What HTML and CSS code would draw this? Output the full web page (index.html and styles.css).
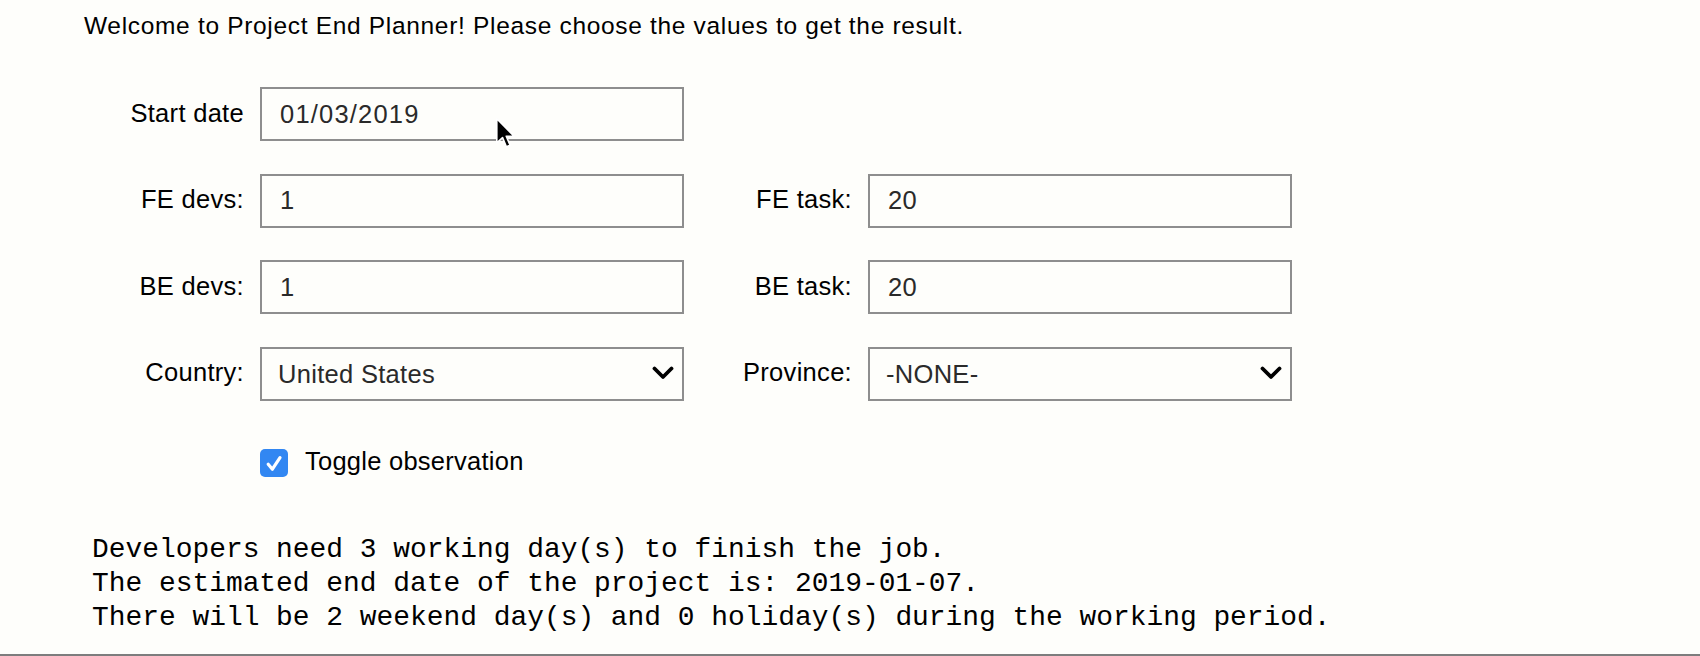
FILE: index.html
```html
<!DOCTYPE html>
<html lang="en">
<head>
<meta charset="utf-8">
<title>Project End Planner</title>
<link rel="stylesheet" href="styles.css">
</head>
<body>
<div class="page">
  <p class="welcome">Welcome to Project End Planner! Please choose the values to get the result.</p>
  <form class="form">
    <label class="label label-left" for="start">Start date</label>
    <input class="field field-date" id="start" type="text" value="01/03/2019">

    <label class="label label-left" for="fedevs">FE devs:</label>
    <input class="field" id="fedevs" type="text" value="1">
    <label class="label" for="fetask">FE task:</label>
    <input class="field" id="fetask" type="text" value="20">

    <label class="label label-left" for="bedevs">BE devs:</label>
    <input class="field" id="bedevs" type="text" value="1">
    <label class="label" for="betask">BE task:</label>
    <input class="field" id="betask" type="text" value="20">

    <label class="label label-left" for="country">Country:</label>
    <div class="select-wrap">
      <select class="field select" id="country"><option>United States</option></select>
      <svg class="chevron" width="22" height="14" viewBox="0 0 22 14"><path d="M2.5 2.5 L11 11 L19.5 2.5" fill="none" stroke="#000" stroke-width="3.8" stroke-linecap="round" stroke-linejoin="round"/></svg>
    </div>
    <label class="label" for="province">Province:</label>
    <div class="select-wrap">
      <select class="field select" id="province"><option>-NONE-</option></select>
      <svg class="chevron" width="22" height="14" viewBox="0 0 22 14"><path d="M2.5 2.5 L11 11 L19.5 2.5" fill="none" stroke="#000" stroke-width="3.8" stroke-linecap="round" stroke-linejoin="round"/></svg>
    </div>

    <label class="check-row">
      <span class="checkbox">
        <svg width="28" height="28" viewBox="0 0 28 28"><path d="M8.2 15.2 L12.4 20.2 L20 8.6" fill="none" stroke="#fff" stroke-width="3.2" stroke-linecap="round" stroke-linejoin="round"/></svg>
      </span>
      <span class="check-text">Toggle observation</span>
    </label>
  </form>
  <pre class="result">Developers need 3 working day(s) to finish the job.
The estimated end date of the project is: 2019-01-07.
There will be 2 weekend day(s) and 0 holiday(s) during the working period.</pre>
  <div class="rule"></div>
  <svg class="cursor" width="22" height="32" viewBox="0 0 13.5 20"><path d="M1 1 L1 16.2 L4.6 12.9 L7 18.6 L9.3 17.6 L6.9 12 L11.8 12 Z" fill="#000" stroke="#fff" stroke-width="1" stroke-linejoin="round"/></svg>
</div>
</body>
</html>
```

FILE: styles.css
```css
html, body {
  margin: 0;
  padding: 0;
  background: #fefefb;
}

.page {
  position: relative;
  height: 656px;
  box-sizing: border-box;
  padding-left: 84px;
  display: flex;
  flex-direction: column;
  font-family: "Liberation Sans", Arial, sans-serif;
  color: #000;
  overflow: hidden;
}

.welcome {
  margin: 11px 0 0 0;
  font-size: 24.5px;
  line-height: 30px;
  letter-spacing: 0.68px;
}

.form {
  margin: 46px 0 0 0;
  display: grid;
  grid-template-columns: 160px 424px 152px 424px;
  grid-auto-rows: 54px;
  column-gap: 16px;
  row-gap: 32.67px;
  align-items: center;
}

.label {
  font-size: 25.5px;
  letter-spacing: 0.3px;
  text-align: right;
  padding-bottom: 2px;
}

.label-left {
  grid-column: 1;
}

.field {
  box-sizing: border-box;
  width: 100%;
  height: 54px;
  margin: 0;
  padding: 0 0 0 18px;
  border: 2px solid #8e8e8e;
  border-radius: 0;
  background: #fefefb;
  font-family: "Liberation Sans", Arial, sans-serif;
  font-size: 25.5px;
  letter-spacing: 0.3px;
  color: #2a2a2a;
  outline: none;
}

.field-date {
  letter-spacing: 1.2px;
}

.select-wrap {
  position: relative;
  height: 54px;
}

.select {
  -webkit-appearance: none;
  appearance: none;
  padding-left: 16px;
}

.chevron {
  position: absolute;
  right: 10px;
  top: 19px;
  pointer-events: none;
}

.check-row {
  grid-column: 2 / 5;
  height: 28px;
  margin-top: 4px;
  display: flex;
  align-items: center;
  gap: 17px;
}

.checkbox {
  width: 28px;
  height: 28px;
  border-radius: 5px;
  background: #3287f2;
  display: flex;
}

.check-text {
  font-size: 25.5px;
  letter-spacing: 0.25px;
  padding-bottom: 3px;
}

.result {
  margin: 45px 0 0 8px;
  font-family: "Liberation Mono", "Courier New", monospace;
  font-size: 27.9px;
  line-height: 34px;
  color: #000;
}

.rule {
  margin-top: auto;
  margin-left: -84px;
  height: 2px;
  background: #7d7d7d;
}

.cursor {
  position: absolute;
  left: 495px;
  top: 117px;
}
```
